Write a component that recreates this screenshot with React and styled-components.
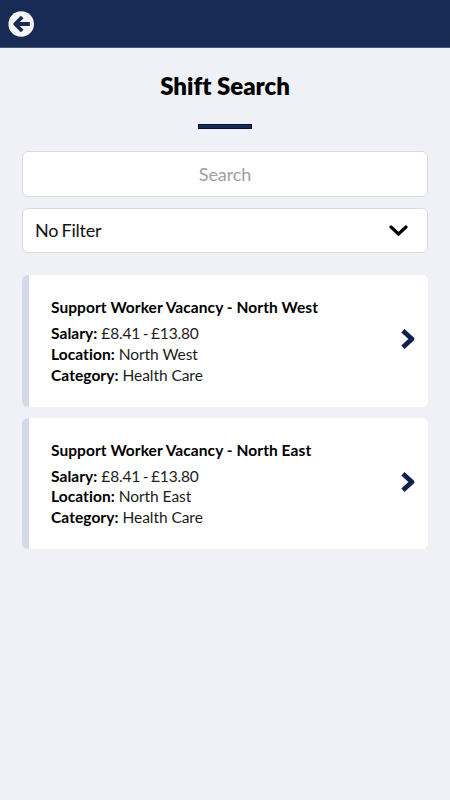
import React, { useState } from 'react';
import styled, { createGlobalStyle } from 'styled-components';

const GlobalStyle = createGlobalStyle`
  * {
    box-sizing: border-box;
  }
  body {
    margin: 0;
    background: #eff1f7;
    color: #000;
    font-family: Lato, sans-serif;
    font-variant-ligatures: none;
  }
`

const Page = styled.div`
  min-height: 100vh;
  background: #eff1f7;
`

const Header = styled.header`
  display: flex;
  align-items: center;
  height: 48px;
  padding: 1px 8px 0;
  background: #182b54;
  border-bottom: 1px solid #4c5a7b;
`

const BackButton = styled.button`
  display: flex;
  padding: 0;
  border: 0;
  background: none;
  color: #f5f5f5;
  cursor: pointer;
`

const Content = styled.main`
  display: flex;
  flex-direction: column;
  padding: 23px 22px 0;
`

const Title = styled.h1`
  margin: 0;
  font-size: 24px;
  font-weight: 800;
  line-height: 29px;
  text-align: center;
`

const Divider = styled.div`
  width: 54px;
  height: 5px;
  margin: 24px auto 22px;
  background: #182b54;
  border: 1px solid #07103a;
`

const SearchInput = styled.input`
  height: 46px;
  margin-bottom: 11px;
  padding: 0 12px;
  background: #fff;
  border: 1px solid #dadbde;
  border-radius: 6px;
  font-family: inherit;
  font-size: 18px;
  letter-spacing: -0.1px;
  text-align: center;
  outline: none;
  &::placeholder {
    color: #a0a0a0;
    opacity: 1;
  }
`

const FilterSelect = styled.button`
  display: flex;
  align-items: center;
  justify-content: space-between;
  height: 45px;
  margin-bottom: 22px;
  padding: 0 19px 1px 12px;
  background: #fff;
  border: 1px solid #dadbde;
  border-radius: 6px;
  color: #111;
  font-family: inherit;
  font-size: 18px;
  letter-spacing: -0.2px;
  word-spacing: -1.2px;
  cursor: pointer;
`

const List = styled.div`
  display: flex;
  flex-direction: column;
  gap: 11px;
`

const Card = styled.article`
  display: flex;
  align-items: center;
  justify-content: space-between;
  height: 131.5px;
  padding: 1px 13px 0 22px;
  background: #fff;
  border-left: 7px solid #d3daea;
  border-radius: 6px;
`

const CardTitle = styled.h2`
  margin: 0 0 6px;
  font-size: 15.5px;
  font-weight: 700;
  line-height: 20px;
  letter-spacing: 0.07px;
`

const Line = styled.p`
  margin: 0;
  color: #1c1c1c;
  font-size: 15.5px;
  line-height: 20.75px;
  letter-spacing: -0.05px;
  b {
    color: #000;
    font-weight: 700;
    letter-spacing: 0.07px;
  }
`

const Salary = styled.span`
  letter-spacing: -0.2px;
  word-spacing: -1px;
`

const ArrowSvg = styled.svg`
  flex: none;
  margin-bottom: 4px;
`

const vacancies = [
  { area: 'North West', salary: '£8.41 - £13.80', category: 'Health Care' },
  { area: 'North East', salary: '£8.41 - £13.80', category: 'Health Care' },
];

const BackIcon = () => (
  <svg width="26" height="26" viewBox="0 0 26 26" fill="none">
    <circle cx="13.2" cy="13" r="12.8" fill="currentColor" />
    <path
      d="M14.2 6L7.2 13L14.2 20M7.5 13H21.8"
      stroke="#182b54"
      strokeWidth="3.8"
      strokeLinejoin="round"
    />
  </svg>
)

const ArrowIcon = () => (
  <ArrowSvg width="15" height="22" viewBox="0 0 15 22" fill="none">
    <path
      d="M2.9 2.7L11.9 11L2.9 19.3"
      stroke="#10204f"
      strokeWidth="4.8"
      strokeLinejoin="round"
    />
  </ArrowSvg>
)

const Vacancy = ({ area, salary, category }) => (
  <Card>
    <div>
      <CardTitle>Support Worker Vacancy - {area}</CardTitle>
      <Line><b>Salary:</b> <Salary>{salary}</Salary></Line>
      <Line><b>Location:</b> {area}</Line>
      <Line><b>Category:</b> {category}</Line>
    </div>
    <ArrowIcon />
  </Card>
);

export default function App() {
  const [search, setSearch] = useState('');

  return (
    <Page>
      <GlobalStyle />
      <Header>
        <BackButton aria-label="Back"><BackIcon /></BackButton>
      </Header>
      <Content>
        <Title>Shift Search</Title>
        <Divider />
        <SearchInput
          placeholder="Search"
          value={search}
          onChange={(e) => setSearch(e.target.value)}
        />
        <FilterSelect>
          No Filter
          <svg width="19" height="12" viewBox="0 0 19 12" fill="none">
            <path d="M2 3L9.5 10L17 3" stroke="#000" strokeWidth="3.2" strokeLinecap="round" />
          </svg>
        </FilterSelect>
        <List>
          {vacancies.map((vacancy) => (
            <Vacancy key={vacancy.area} {...vacancy} />
          ))}
        </List>
      </Content>
    </Page>
  );
}
